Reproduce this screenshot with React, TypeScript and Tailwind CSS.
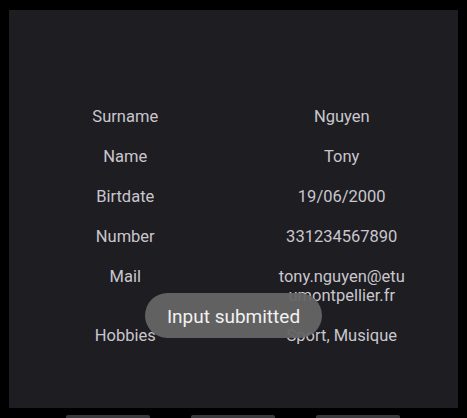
const rows: Array<[string, string]> = [
    ["Surname", "Nguyen"],
    ["Name", "Tony"],
    ["Birtdate", "19/06/2000"],
    ["Number", "331234567890"],
    ["Mail", "tony.nguyen@etuumontpellier.fr"],
    ["Hobbies", "Sport, Musique"],
];

export default function App() {
    return <div className="w-[467px] h-[418px] bg-black overflow-hidden relative" style={{ fontFamily: "Roboto, 'Noto Sans', sans-serif" }}>
        <div className="mx-[9px] mt-[10px] h-[398px] bg-[#1e1d22] px-[8px] pt-[86px]">
            <div className="grid grid-cols-2 text-[16.5px] leading-[19px] text-[#c9c7cd]">
                {
                    rows.map(([label, value]) => (
                        <div key={label} className="contents">
                            <div className="py-[10.5px] text-center">{label}</div>
                            <div className="py-[10.5px] flex justify-center">
                                <span className="w-[132px] text-center break-all">{value}</span>
                            </div>
                        </div>
                    ))
                }
            </div>
        </div>

        {/* bottom buttons, mostly cut off */}
        <div className="flex gap-[41px] pl-[66px] mt-[7px]">
            <div className="w-[84px] h-[10px] rounded-t-[2px] bg-[#3a3a3d]" />
            <div className="w-[84px] h-[10px] rounded-t-[2px] bg-[#3a3a3d]" />
            <div className="w-[84px] h-[10px] rounded-t-[2px] bg-[#3a3a3d]" />
        </div>

        {/* toast */}
        <div className="absolute left-[145px] top-[293px] w-[177px] h-[45px] pt-[3px] rounded-full bg-[#656565]/95 flex items-center justify-center text-[19px] text-[#f2f2f2]">
            Input submitted
        </div>
    </div>
}
